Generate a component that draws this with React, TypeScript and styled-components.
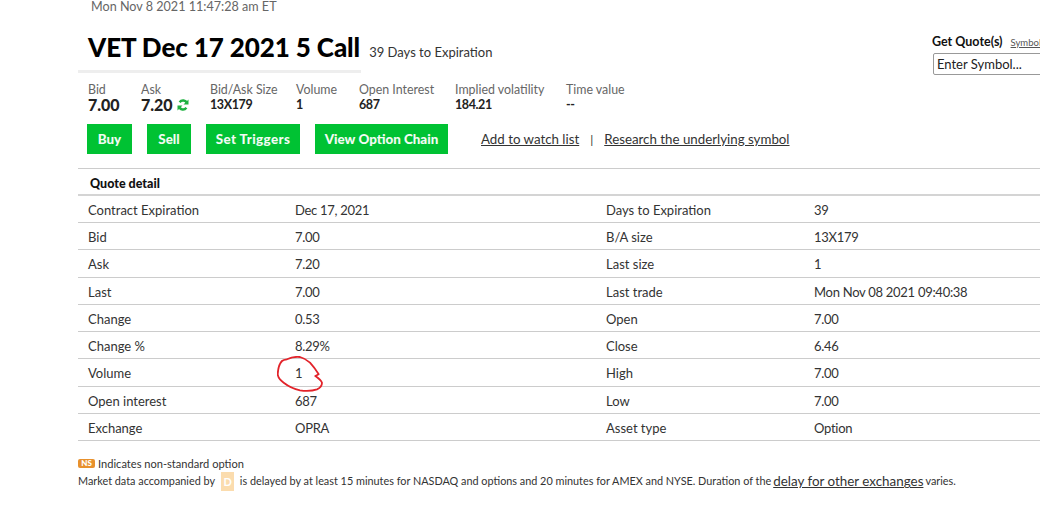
import React from 'react'
import styled, { createGlobalStyle } from 'styled-components'

const GlobalStyle = createGlobalStyle`
  html, body {
    margin: 0;
    padding: 0;
    background: #fff;
    overflow: hidden;
  }
  body {
    font-family: Lato, "Liberation Sans", sans-serif;
    color: #333;
  }
`

const Page = styled.div`
  width: 1040px;
  height: 521px;
  overflow: hidden;
  box-sizing: border-box;
  padding-left: 78px;
`

const Timestamp = styled.div`
  padding-left: 13px;
  height: 14px;
  font-size: 12.6px;
  line-height: 13px;
  color: #666;
`

const Header = styled.div`
  display: flex;
  width: 1100px;
`

const HeaderMain = styled.div`
  width: 854px;
  flex: none;
`

const TitleRow = styled.div`
  display: flex;
  align-items: baseline;
  padding: 17px 0 0 10px;
  height: 53px;
  box-sizing: border-box;
`

const Title = styled.h1`
  margin: 0;
  font-size: 26px;
  line-height: 32px;
  font-weight: 900;
  color: #000;
  letter-spacing: -0.1px;
`

const TitleNote = styled.span`
  margin-left: 9px;
  font-size: 13px;
  color: #333;
`

const TitleRule = styled.div`
  width: 283px;
  height: 3px;
  margin-top: 3px;
  background: #eee;
`

const Stats = styled.div`
  display: flex;
  margin-top: 9px;
  padding-left: 10px;
  height: 35px;
`

const Stat = styled.div<{ $width: number }>`
  width: ${props => props.$width}px;
  flex: none;
`

const StatLabel = styled.div`
  font-size: 12.4px;
  line-height: 15px;
  color: #666;
`

const StatValue = styled.div<{ $big?: boolean }>`
  display: flex;
  align-items: center;
  gap: 4px;
  font-size: ${props => (props.$big ? '16px' : '12.5px')};
  line-height: ${props => (props.$big ? '16px' : '15px')};
  font-weight: ${props => (props.$big ? 900 : 700)};
  letter-spacing: ${props => (props.$big ? '0' : '-0.4px')};
  color: #222;
`

const Actions = styled.div`
  display: flex;
  align-items: center;
  margin-top: 7px;
  padding-left: 9px;
`

const ActionButton = styled.button<{ $width: number; $gap: number; $spread?: boolean }>`
  width: ${props => props.$width}px;
  height: 30px;
  margin-right: ${props => props.$gap}px;
  padding: 0;
  border: 0;
  background: #00c233;
  color: #f2fbf3;
  font-family: inherit;
  font-size: 13.4px;
  font-weight: 900;
  letter-spacing: ${props => (props.$spread ? '0.4px' : '0')};
`

const ActionLink = styled.a`
  font-size: 13.3px;
  color: #333;
  text-decoration: underline;
`

const Divider = styled.span`
  margin: 0 11px 0 11px;
  font-size: 12px;
  color: #333;
`

const QuotePanel = styled.div`
  flex: none;
  margin-top: 21px;
`

const QuoteHead = styled.div`
  display: flex;
  align-items: baseline;
  gap: 8px;
  height: 14px;
  line-height: 14px;
  width: 108px;
  overflow: hidden;
`

const QuoteLabel = styled.span`
  font-size: 12.5px;
  font-weight: 700;
  color: #111;
  white-space: nowrap;
`

const QuoteLink = styled.a`
  font-size: 9.5px;
  color: #555;
  text-decoration: underline;
  white-space: nowrap;
`

const SymbolInput = styled.input`
  display: block;
  box-sizing: border-box;
  width: 180px;
  height: 22px;
  margin: 4px 0 0 1px;
  padding: 0 3px;
  border: 1px solid #999;
  border-radius: 2px;
  font-family: inherit;
  font-size: 13px;
  color: #222;

  &::placeholder {
    color: #222;
    opacity: 1;
  }
`

const QuoteTable = styled.div`
  position: relative;
  width: 962px;
  margin-top: 14px;
  border-top: 1px solid #ccc;
`

const TableTitle = styled.div`
  height: 25px;
  padding-left: 12px;
  border-bottom: 2px solid #d4d4d4;
  font-size: 12.5px;
  line-height: 30px;
  font-weight: 900;
  color: #111;
`

const Row = styled.div`
  display: grid;
  grid-template-columns: 207px 311px 208px 1fr;
  height: 27.22px;
  box-sizing: border-box;
  padding-left: 10px;
  border-bottom: 1px solid #ccc;
  font-size: 13px;
  line-height: 28px;
  color: #333;
`

const Value = styled.span`
  letter-spacing: -0.28px;
`

const Scribble = styled.svg`
  position: absolute;
  left: 199px;
  top: 187px;
  width: 50px;
  height: 40px;
  fill: none;
  stroke: #e2232a;
  stroke-width: 1.8;
  stroke-linecap: round;
  stroke-linejoin: round;
`

const Notes = styled.div`
  margin-top: 15px;
  font-size: 11.1px;
  line-height: 16px;
  color: #333;
`

const NoteLine = styled.div`
  display: flex;
  align-items: center;
  white-space: pre;
`

const DelayNote = styled(NoteLine)`
  font-size: 10.85px;
`

const NsBadge = styled.span`
  display: inline-block;
  width: 17px;
  height: 9px;
  margin-right: 3px;
  border-radius: 2px;
  background: #e8912d;
  color: #fff;
  font-size: 8px;
  line-height: 9px;
  font-weight: 900;
  text-align: center;
`

const DelayBadge = styled.span`
  display: inline-block;
  width: 13px;
  height: 19px;
  margin: 0 3px 0 6px;
  background: #fbdcae;
  color: #fff;
  font-size: 11px;
  line-height: 19px;
  font-weight: 700;
  text-align: center;
`

const DelayLink = styled.a`
  margin: 0 2px;
  font-size: 13.4px;
  color: #333;
  text-decoration: underline;
`

const stats = [
  { label: 'Bid/Ask Size', value: '13X179', width: 86 },
  { label: 'Volume', value: '1', width: 63 },
  { label: 'Open Interest', value: '687', width: 96 },
  { label: 'Implied volatility', value: '184.21', width: 111 },
  { label: 'Time value', value: '--', width: 80 },
]

const rows = [
  ['Contract Expiration', 'Dec 17, 2021', 'Days to Expiration', '39'],
  ['Bid', '7.00', 'B/A size', '13X179'],
  ['Ask', '7.20', 'Last size', '1'],
  ['Last', '7.00', 'Last trade', 'Mon Nov 08 2021 09:40:38'],
  ['Change', '0.53', 'Open', '7.00'],
  ['Change %', '8.29%', 'Close', '6.46'],
  ['Volume', '1', 'High', '7.00'],
  ['Open interest', '687', 'Low', '7.00'],
  ['Exchange', 'OPRA', 'Asset type', 'Option'],
]

const RefreshIcon = () => (
  <svg width="12" height="12" viewBox="0 0 12 12" fill="none" stroke="#1fb141" strokeWidth="2.4">
    <path d="M10 4.2A4.3 4.3 0 0 0 2.6 3.2" />
    <path d="M2 7.8A4.3 4.3 0 0 0 9.4 8.8" />
    <path d="M11.5 .5v5h-5z" fill="#1fb141" stroke="none" />
    <path d="M.5 11.5v-5h5z" fill="#1fb141" stroke="none" />
  </svg>
)

export default function App() {
  return (
    <Page>
      <GlobalStyle />
      <Timestamp>Mon Nov 8 2021 11:47:28 am ET</Timestamp>
      <Header>
        <HeaderMain>
          <TitleRow>
            <Title>VET Dec 17 2021 5 Call</Title>
            <TitleNote>39 Days to Expiration</TitleNote>
          </TitleRow>
          <TitleRule />
          <Stats>
            <Stat $width={53}>
              <StatLabel>Bid</StatLabel>
              <StatValue $big>7.00</StatValue>
            </Stat>
            <Stat $width={69}>
              <StatLabel>Ask</StatLabel>
              <StatValue $big>
                7.20 <RefreshIcon />
              </StatValue>
            </Stat>
            {stats.map(stat => (
              <Stat key={stat.label} $width={stat.width}>
                <StatLabel>{stat.label}</StatLabel>
                <StatValue>{stat.value}</StatValue>
              </Stat>
            ))}
          </Stats>
          <Actions>
            <ActionButton $width={45} $gap={15}>Buy</ActionButton>
            <ActionButton $width={44} $gap={15}>Sell</ActionButton>
            <ActionButton $width={94} $gap={15} $spread>Set Triggers</ActionButton>
            <ActionButton $width={133} $gap={33}>View Option Chain</ActionButton>
            <ActionLink>Add to watch list</ActionLink>
            <Divider>|</Divider>
            <ActionLink>Research the underlying symbol</ActionLink>
          </Actions>
        </HeaderMain>
        <QuotePanel>
          <QuoteHead>
            <QuoteLabel>Get Quote(s)</QuoteLabel>
            <QuoteLink>Symbol</QuoteLink>
          </QuoteHead>
          <SymbolInput placeholder="Enter Symbol..." />
        </QuotePanel>
      </Header>
      <QuoteTable>
        <TableTitle>Quote detail</TableTitle>
        {rows.map(row => (
          <Row key={row[0]}>
            <span>{row[0]}</span>
            <Value>{row[1]}</Value>
            <span>{row[2]}</span>
            <Value>{row[3]}</Value>
          </Row>
        ))}
        <Scribble viewBox="0 0 50 40">
          <path d="M10 3.3C14 1.5 19 .5 23 1C27 2 30 4 33 6.7C36 10 39 14 41.7 18.3L38.3 20C41 22 44 24 45 26.7C45 30 43 32 40 33.3C35 35 28 35 23 34.3C17 33 11 30 6.7 26.7C3 24 1 21 .7 18.3C1 13 2 8 5 5C6 4 8 3.5 10 3.3" />
        </Scribble>
      </QuoteTable>
      <Notes>
        <NoteLine>
          <NsBadge>NS</NsBadge>Indicates non-standard option
        </NoteLine>
        <DelayNote>
          Market data accompanied by<DelayBadge>D</DelayBadge> is delayed by at least 15 minutes for NASDAQ and options and 20 minutes for AMEX and NYSE. Duration of the<DelayLink>delay for other exchanges</DelayLink>varies.
        </DelayNote>
      </Notes>
    </Page>
  )
}
